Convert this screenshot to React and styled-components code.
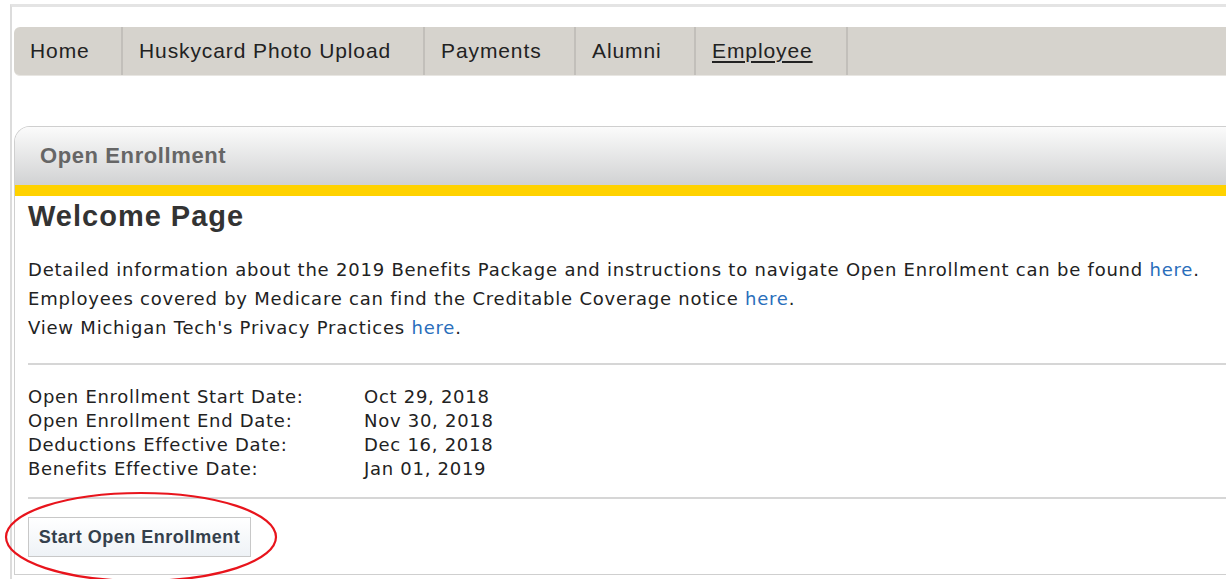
import React from 'react'
import styled, { createGlobalStyle } from 'styled-components'

const GlobalStyle = createGlobalStyle`
  html, body {
    margin: 0;
    padding: 0;
    background: #ffffff;
  }
  body {
    font-family: "Liberation Sans", Arial, sans-serif;
    overflow: hidden;
  }
`

const navItems = [
  { label: 'Home', width: 109 },
  { label: 'Huskycard Photo Upload', width: 302 },
  { label: 'Payments', width: 151 },
  { label: 'Alumni', width: 120 },
  { label: 'Employee', width: 152, active: true },
]

const dates = [
  ['Open Enrollment Start Date:', 'Oct 29, 2018'],
  ['Open Enrollment End Date:', 'Nov 30, 2018'],
  ['Deductions Effective Date:', 'Dec 16, 2018'],
  ['Benefits Effective Date:', 'Jan 01, 2019'],
]

const App = () => {
  return (
    <Frame>
      <GlobalStyle />
      <NavBar>
        {navItems.map(item => (
          <NavItem key={item.label} $width={item.width} $active={item.active}>
            {item.label}
          </NavItem>
        ))}
      </NavBar>

      <Panel>
        <PanelHeader>Open Enrollment</PanelHeader>
        <PanelBody>
          <Title>Welcome Page</Title>
          <Intro>
            Detailed information about the 2019 Benefits Package and instructions to navigate Open Enrollment can be found <Link href="#">here</Link>.
            <br />
            Employees covered by Medicare can find the Creditable Coverage notice <Link href="#">here</Link>.
            <br />
            View Michigan Tech's Privacy Practices <Link href="#">here</Link>.
          </Intro>
          <Rule />
          <DateTable>
            {dates.map(([label, value]) => (
              <React.Fragment key={label}>
                <span>{label}</span>
                <span>{value}</span>
              </React.Fragment>
            ))}
          </DateTable>
          <Rule />
          <ButtonRow>
            <StartButton>Start Open Enrollment</StartButton>
            <Circle viewBox="0 0 276 94" aria-hidden="true">
              <ellipse cx="138" cy="46" rx="135" ry="44" fill="none" stroke="#e8141c" strokeWidth="2.2" />
            </Circle>
          </ButtonRow>
        </PanelBody>
      </Panel>
    </Frame>
  )
}

export default App

const Frame = styled.div`
  margin: 4px 0 0 10px;
  height: 575px;
  border-top: 3px solid #e4e4e4;
  border-left: 2px solid #dcdcdc;
  padding: 20px 0 0 2px;
  box-sizing: border-box;
`

const NavBar = styled.div`
  display: flex;
  height: 48px;
  background: #d6d3cd;
  border-radius: 6px 0 0 6px;
  border-bottom: 1px solid #e8e6e2;
`

const NavItem = styled.div`
  width: ${p => p.$width}px;
  box-sizing: border-box;
  display: flex;
  align-items: center;
  padding-left: 16px;
  border-right: 2px solid #c2bfba;
  font-size: 21px;
  letter-spacing: 0.9px;
  color: #222;
  text-decoration: ${p => (p.$active ? 'underline' : 'none')};
  text-underline-offset: 3px;
`

const Panel = styled.div`
  margin-top: 50px;
  height: 449px;
  box-sizing: border-box;
  border: 1px solid #cfcfcf;
  border-right: none;
  border-radius: 16px 0 0 0;
`

const PanelHeader = styled.div`
  height: 58px;
  display: flex;
  align-items: center;
  padding-left: 25px;
  border-radius: 15px 0 0 0;
  background: linear-gradient(to bottom, #fbfbfb 0%, #d1d2d3 100%);
  border-bottom: 11px solid #ffd200;
  font-size: 22px;
  letter-spacing: 0.6px;
  font-weight: bold;
  color: #666;
`

const PanelBody = styled.div`
  padding: 3px 0 0 13px;
`

const Title = styled.h1`
  margin: 0;
  font-size: 29px;
  letter-spacing: 1px;
  font-weight: bold;
  color: #333;
  line-height: 34px;
`

const Intro = styled.p`
  margin: 22px 0 21px;
  font-family: "DejaVu Sans", Verdana, sans-serif;
  font-size: 18px;
  letter-spacing: 0.78px;
  line-height: 29px;
  color: #222;
`

const Link = styled.a`
  color: #2a6ebb;
  text-decoration: none;
`

const Rule = styled.hr`
  margin: 0;
  border: none;
  border-top: 2px solid #d6d6d6;
`

const DateTable = styled.div`
  display: grid;
  grid-template-columns: 336px auto;
  padding: 20px 0 16px;
  font-family: "DejaVu Sans", Verdana, sans-serif;
  font-size: 18px;
  letter-spacing: 0.72px;
  line-height: 24px;
  color: #222;
`

const ButtonRow = styled.div`
  position: relative;
  padding-top: 18px;
`

const StartButton = styled.button`
  width: 223px;
  height: 40px;
  padding: 0;
  border: 1px solid #c8c8c8;
  background: linear-gradient(to bottom, #ffffff 0%, #eef2f6 100%);
  font-family: "Liberation Sans", Arial, sans-serif;
  font-size: 18px;
  letter-spacing: 0.5px;
  font-weight: bold;
  color: #34404c;
`

const Circle = styled.svg`
  position: absolute;
  left: -25px;
  top: -8px;
  width: 276px;
  height: 94px;
  pointer-events: none;
`
